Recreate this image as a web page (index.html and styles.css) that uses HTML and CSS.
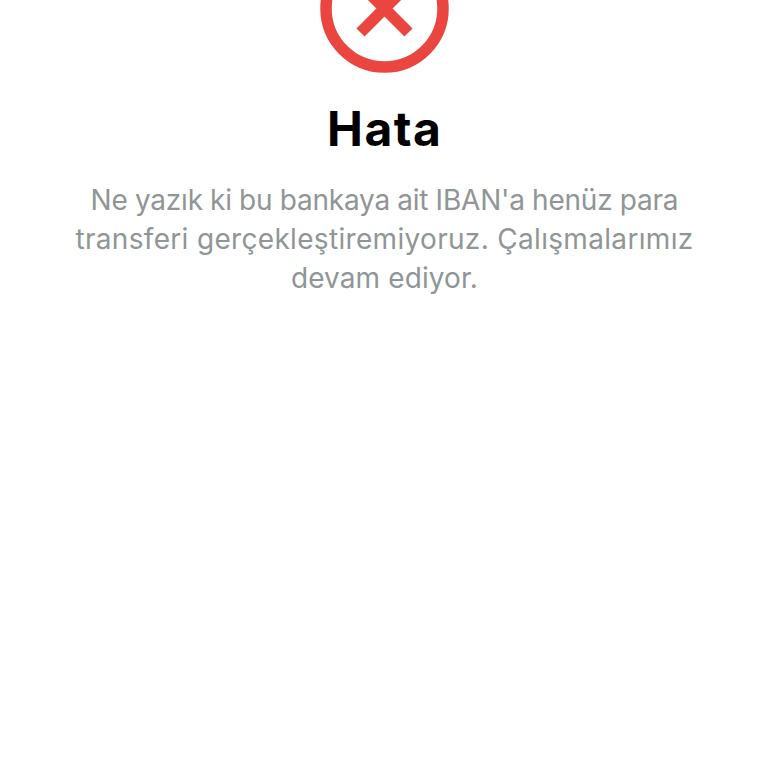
FILE: index.html
```html
<!DOCTYPE html>
<html lang="tr">
<head>
    <meta charset="UTF-8">
    <meta name="viewport" content="width=device-width, initial-scale=1.0">
    <title>Hata</title>
    <link rel="stylesheet" href="styles.css">
</head>
<body>
    <main class="error-page">
        <svg class="error-icon" viewBox="0 0 130 73" aria-hidden="true">
            <circle cx="65.500" cy="8.500" r="58.500" />
            <path d="M41.500 -15.500L89.500 32.500M89.500 -15.500L41.500 32.500" />
        </svg>
        <h1>Hata</h1>
        <p class="message">
            <span class="line line-1">Ne yazık ki bu bankaya ait IBAN'a henüz para</span>
            <span class="line line-2">transferi gerçekleştiremiyoruz. Çalışmalarımız</span>
            <span class="line line-3">devam ediyor.</span>
        </p>
    </main>
</body>
</html>
```

FILE: styles.css
```css
body {
    font-family: Inter, "Liberation Sans", sans-serif;
    margin: 0;
    background-color: #ffffff;
}

.error-page {
    display: flex;
    flex-direction: column;
    align-items: center;
    text-align: center;
}

.error-icon {
    width: 130px;
    height: 73px;
    fill: none;
    stroke: #ea463f;
    stroke-width: 11.5;
}

h1 {
    margin: 27px 0 0;
    font-size: 48px;
    line-height: 58px;
    font-weight: 700;
    letter-spacing: 1.5px;
    text-indent: 1.5px;
    color: #000000;
}

.message {
    margin: 23px 0 0;
    padding-left: 1px;
    font-size: 28px;
    line-height: 39px;
    color: #909596;
}

.line {
    display: block;
    white-space: nowrap;
}

.line-1 {
    letter-spacing: -0.2px;
    word-spacing: -0.4px;
}

.line-2 {
    letter-spacing: 0.32px;
}

.line-3 {
    letter-spacing: 0.1px;
}
```
